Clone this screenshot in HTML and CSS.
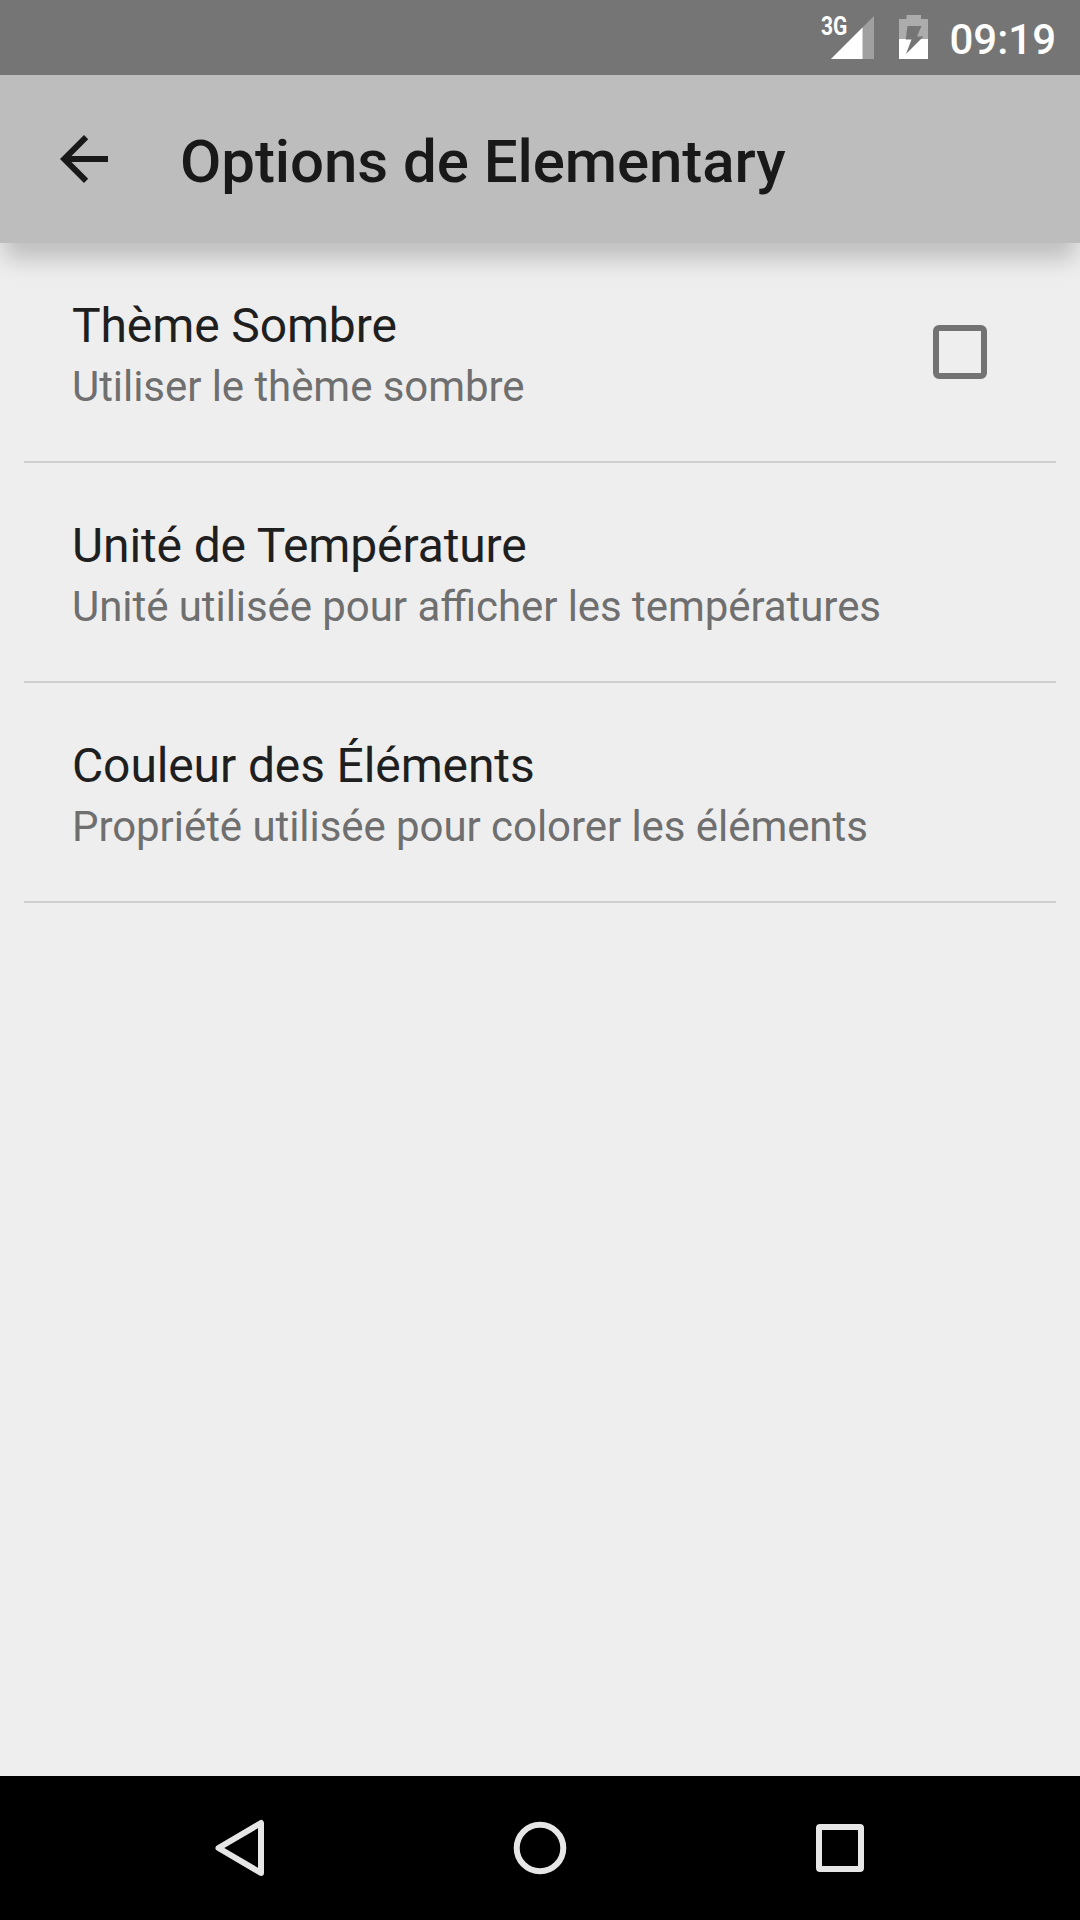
FILE: index.html
```html
<!DOCTYPE html>
<html lang="fr">
<head>
<meta charset="utf-8">
<title>Options de Elementary</title>
<link rel="stylesheet" href="styles.css">
</head>
<body>
<div class="screen">
  <div class="status-bar">
    <div class="signal">
      <svg class="signal-icon" width="43" height="43" viewBox="0 0 43 43"><path d="M43 0V43H0Z" fill="#a0a0a0"/><path d="M31.500 11.500V43H0Z" fill="#fff"/></svg>
      <span class="network">3G</span>
    </div>
    <svg class="battery" width="29" height="44" viewBox="0 0 29 44"><path d="M7.500 0H22V4H29V24H0V4H7.500Z" fill="#acacac"/><path d="M0 24H29V44H0Z" fill="#fff"/><path d="M8.500 11H22.500L18 21.500H24.500L7 39 12.500 24.500H6.700Z" fill="#757575"/></svg>
    <span class="clock">09:19</span>
  </div>
  <header class="app-bar">
    <svg class="back" width="48" height="48" viewBox="0 0 48 48"><path d="M48 21V27H11.500L28.200 43.800 24 48 0 24 24 0 28.200 4.200 11.500 21Z" fill="#191919"/></svg>
    <h1 class="title">Options de Elementary</h1>
  </header>
  <main class="options">
    <section class="option">
      <div class="labels"><h2 class="name">Thème Sombre</h2><p class="summary">Utiliser le thème sombre</p></div>
      <span class="checkbox"></span>
    </section>
    <section class="option">
      <div class="labels"><h2 class="name">Unité de Température</h2><p class="summary">Unité utilisée pour afficher les températures</p></div>
    </section>
    <section class="option">
      <div class="labels"><h2 class="name">Couleur des Éléments</h2><p class="summary">Propriété utilisée pour colorer les éléments</p></div>
    </section>
  </main>
  <nav class="nav-bar">
    <svg width="60" height="60" viewBox="0 0 60 60"><path d="M51 5V55L8.500 30Z"/></svg>
    <svg width="60" height="60" viewBox="0 0 60 60"><circle cx="30" cy="30" r="23.300"/></svg>
    <svg width="60" height="60" viewBox="0 0 60 60"><rect x="9" y="9" width="42" height="42" rx="1"/></svg>
  </nav>
</div>
</body>
</html>
```
FILE: styles.css
```css
* { box-sizing: border-box; margin: 0; padding: 0; }
body { font-family: Roboto, sans-serif; background: #eee; }
svg { display: block; flex: none; }
.screen { width: 1080px; height: 1920px; display: flex; flex-direction: column; overflow: hidden; }
.status-bar { height: 75px; background: #757575; display: flex; justify-content: flex-end; align-items: flex-start; padding: 0 24px; color: #fff; }
.signal { position: relative; margin: 16px 25px 0 0; }
.network { position: absolute; left: -10px; top: -2px; font-size: 25px; line-height: 25px; font-weight: 700; transform: scaleX(.84); transform-origin: left; }
.battery { margin: 15px 21px 0 0; }
.clock { font-size: 42px; line-height: 49px; font-weight: 500; margin-top: 15px; }
.app-bar { height: 168px; background: #bdbdbd; display: flex; align-items: center; padding-left: 60px; box-shadow: 0 20px 22px -4px rgba(0,0,0,.2); z-index: 1; }
.title { margin: 5px 0 0 72px; font-size: 60px; line-height: 70px; font-weight: 500; color: #191919; letter-spacing: -.07px; }
.options { flex: 1; padding: 0 24px; }
.option { height: 220px; border-bottom: 2px solid #d0d0d0; display: flex; align-items: center; justify-content: space-between; padding: 0 69px 0 48px; }
.labels { margin-top: 5px; }
.name { font-size: 48px; line-height: 56px; font-weight: 400; color: #1f1f1f; letter-spacing: -.12px; }
.summary { font-size: 42px; line-height: 49px; color: #6f6f6f; margin-top: 8px; letter-spacing: -.06px; font-feature-settings: "liga" 1; }
.checkbox { width: 54px; height: 54px; border: 6px solid #737373; border-radius: 6px; }
.nav-bar { height: 144px; background: #000; display: flex; justify-content: center; align-items: center; gap: 240px; }
.nav-bar svg { fill: none; stroke: #e6e6e6; stroke-width: 6; stroke-linejoin: round; }
```
